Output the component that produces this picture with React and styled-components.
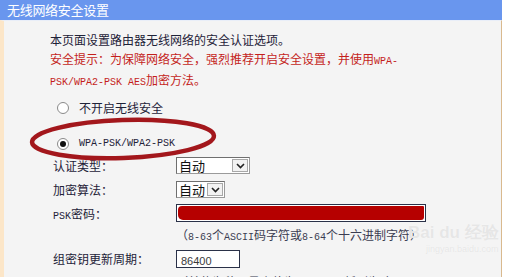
import React from "react";
import styled, { createGlobalStyle } from "styled-components";

const GlobalStyle = createGlobalStyle`
  html, body {
    margin: 0;
    padding: 0;
    background: #ffffff;
    overflow: hidden;
  }
  body {
    font-family: "Noto Sans CJK SC", "Noto Sans", sans-serif;
    font-size: 12px;
    color: #1e2238;
  }
`;

const Page = styled.div`
  position: relative;
  width: 502px;
  height: 277px;
  overflow: hidden;
`;

const Header = styled.div`
  height: 20px;
  background: #6996ee;
  color: #ffffff;
  font-size: 13px;
  line-height: 20px;
  padding-left: 7px;
  letter-spacing: -0.3px;
`;

const Body = styled.div`
  height: 257px;
  background: #f4f4f4;
  border-left: 4px solid #fce6c8;
  border-right: 1px solid #d9b98e;
  border-top: 1px solid #e9eef8;
  padding: 10px 0 0 46px;
  box-sizing: border-box;
`;

const Intro = styled.p`
  margin: 0;
  line-height: 18.5px;
`;

const Warn = styled.span`
  color: #c41f1c;
`;

const Mono = styled.span`
  font-family: "Liberation Mono", monospace;
  font-size: 10px;
`;

const RadioRow = styled.label`
  display: flex;
  align-items: center;
  gap: 10px;
  height: ${({ $h }) => $h}px;
  margin-top: ${({ $mt }) => $mt}px;
  padding-left: 7px;
`;

const Radio = styled.input.attrs({ type: "radio" })`
  appearance: none;
  margin: 0;
  width: 12px;
  height: 12px;
  border: 1px solid #8a8a8a;
  border-radius: 50%;
  background: #ffffff;
  box-sizing: border-box;
  display: grid;
  place-content: center;

  &:checked::after {
    content: "";
    width: 6px;
    height: 6px;
    border-radius: 50%;
    background: #111111;
  }
`;

const FormRow = styled.div`
  display: grid;
  grid-template-columns: 126px 1fr;
  align-items: center;
  height: ${({ $h }) => $h}px;
`;

const Label = styled.span`
  padding-left: 3px;
`;

const Select = styled.div`
  display: flex;
  align-items: stretch;
  justify-content: space-between;
  width: ${({ $w }) => $w}px;
  height: 17px;
  box-sizing: border-box;
  background: #ffffff;
  border: 1px solid #9a9a9a;
  border-top-color: #6f6f6f;
  border-left-color: #6f6f6f;
  font-size: 13px;
  line-height: 15px;
  color: #111111;
`;

const SelectText = styled.span`
  padding-left: 2px;
`;

const SelectButton = styled.span`
  width: 16px;
  margin: 1px;
  box-sizing: border-box;
  border: 1px solid #a8a8a8;
  background: #f2f2f2;
  display: grid;
  place-content: center;
`;

const TextInput = styled.div`
  width: ${({ $w }) => $w}px;
  height: 18px;
  box-sizing: border-box;
  border: 1px solid #2a3148;
  background: #ffffff;
  padding: 1px;
  font-size: 11px;
  line-height: 16px;
  color: #3a3a3a;
`;

const Scribble = styled.div`
  height: 100%;
  background: #b60000;
  border-radius: 4px 1px 3px 5px;
`;

const InputText = styled.span`
  padding-left: 3px;
  font-family: "Liberation Sans", sans-serif;
`;

const Hint = styled.span`
  color: #3b3d52;
`;

const Watermark = styled.div`
  position: absolute;
  left: 408px;
  top: 224px;
  color: #e6e6e6;
  text-shadow: 0 0 1px #ffffff;
  font-family: "Liberation Sans", sans-serif;
  line-height: 1;
  white-space: nowrap;
  pointer-events: none;
`;

const MarkBig = styled.div`
  font-size: 17px;
  font-weight: bold;
`;

const MarkSmall = styled.div`
  font-size: 9px;
  margin-top: 4px;
  padding-left: 18px;
`;

const Overlay = styled.svg`
  position: absolute;
  left: 0;
  top: 0;
  pointer-events: none;
`;

function Chevron() {
  return (
    <svg width="9" height="6" viewBox="0 0 9 6">
      <polyline points="1,1 4.5,4.5 8,1" fill="none" stroke="#222" strokeWidth="1.6" />
    </svg>
  );
}

export default function App() {
  return (
    <>
      <GlobalStyle />
      <Page>
        <Header>无线网络安全设置</Header>
        <Body>
          <Intro>
            本页面设置路由器无线网络的安全认证选项。
            <br />
            <Warn>
              安全提示：为保障网络安全，强烈推荐开启安全设置，并使用<Mono>WPA-</Mono>
              <br />
              <Mono>PSK/WPA2-PSK AES</Mono>加密方法。
            </Warn>
          </Intro>

          <RadioRow $h={24} $mt={3}>
            <Radio name="sec" />
            不开启无线安全
          </RadioRow>
          <RadioRow $h={20} $mt={14}>
            <Radio name="sec" defaultChecked />
            <Mono>WPA-PSK/WPA2-PSK</Mono>
          </RadioRow>

          <FormRow $h={24}>
            <Label>认证类型：</Label>
            <Select $w={74}>
              <SelectText>自动</SelectText>
              <SelectButton>
                <Chevron />
              </SelectButton>
            </Select>
          </FormRow>
          <FormRow $h={24}>
            <Label>加密算法：</Label>
            <Select $w={49}>
              <SelectText>自动</SelectText>
              <SelectButton>
                <Chevron />
              </SelectButton>
            </Select>
          </FormRow>
          <FormRow $h={23}>
            <Label>
              <Mono>PSK</Mono>密码：
            </Label>
            <TextInput $w={250}>
              <Scribble />
            </TextInput>
          </FormRow>
          <FormRow $h={20}>
            <span />
            <Hint>
              （<Mono>8-63</Mono>个<Mono>ASCII</Mono>码字符或<Mono>8-64</Mono>个十六进制字符）
            </Hint>
          </FormRow>
          <FormRow $h={28}>
            <Label>组密钥更新周期：</Label>
            <TextInput $w={64}>
              <InputText>86400</InputText>
            </TextInput>
          </FormRow>
          <FormRow $h={16}>
            <span />
            <Hint>
              （单位为秒，最小值为<Mono>30</Mono>，不更新则为<Mono>0</Mono>）
            </Hint>
          </FormRow>
        </Body>

        <Overlay width="502" height="277" viewBox="0 0 502 277">
          <ellipse
            cx="123"
            cy="139"
            rx="91"
            ry="19"
            fill="none"
            stroke="#a3171c"
            strokeWidth="4.5"
            transform="rotate(-2 123 139)"
          />
        </Overlay>

        <Watermark>
          <MarkBig>Bai du 经验</MarkBig>
          <MarkSmall>jingyan.baidu.com</MarkSmall>
        </Watermark>
      </Page>
    </>
  );
}
